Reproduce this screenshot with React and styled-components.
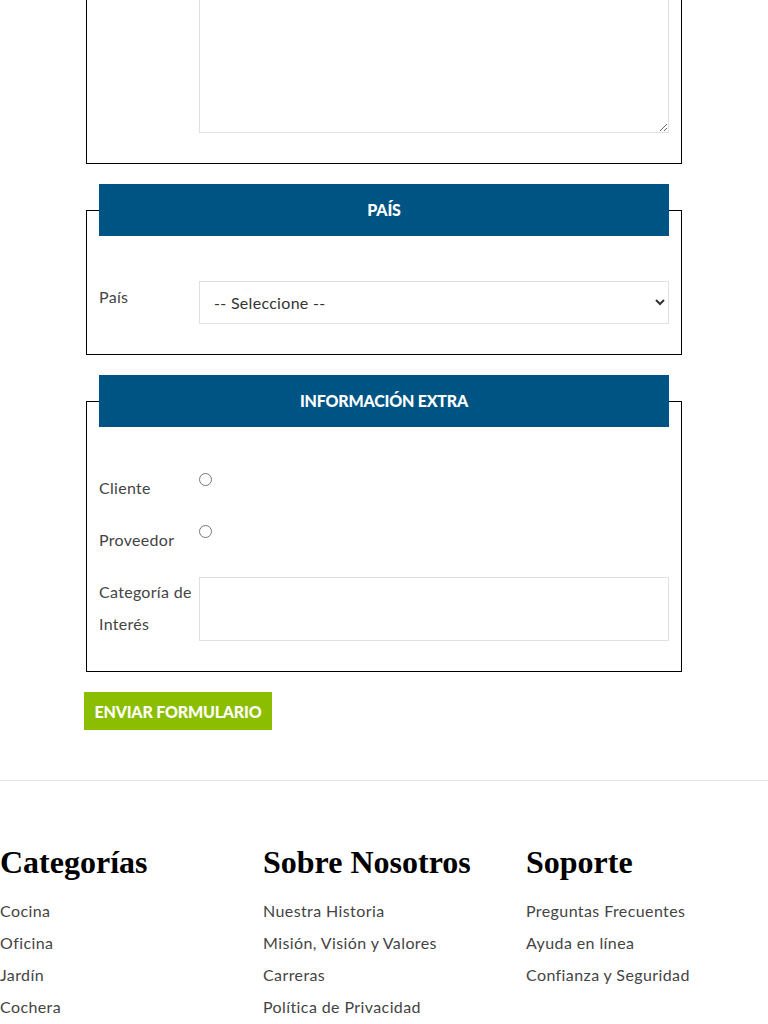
import React from 'react';
import styled, { createGlobalStyle } from 'styled-components';

const GlobalStyle = createGlobalStyle`
  * { box-sizing: border-box; }
  body {
    margin: 0;
    background: #fff;
    font-family: Lato, "Liberation Sans", sans-serif;
    color: #333;
  }
`;

const FormArea = styled.form`
  padding-left: 84px;
  width: 682px;
`;

// bottom part of the section above, scrolled out of view
const CutBox = styled.div`
  margin-left: 2px;
  border: 1px solid #000;
  border-top: none;
  padding: 0 12px 30px;
`;

const Box = styled.fieldset`
  margin: 20px 0 0 2px;
  min-width: 0;
  border: 1px solid #000;
  padding: 0 12px 30px;
`;

const Legend = styled.legend`
  display: block;
  width: 100%;
  height: 52px;
  padding: 0;
  background: #005483;
  color: #fff;
  text-align: center;
  font-family: Lato, sans-serif;
  font-weight: 900;
  font-size: 16px;
  line-height: 52px;
  letter-spacing: -0.2px;
  text-transform: uppercase;
`;

const Rows = styled.div`
  margin-top: 45px;
  display: flex;
  flex-direction: column;
  gap: 20px;
`;

const Row = styled.div`
  display: grid;
  grid-template-columns: 100px 1fr;
  align-items: start;
`;

const Label = styled.label`
  font-size: 16px;
  line-height: 32px;
  letter-spacing: 0.3px;
  color: #444;
`;

const TextArea = styled.textarea`
  display: block;
  width: 100%;
  height: ${p => p.$h}px;
  margin-top: ${p => (p.$cut ? 0 : 1)}px;
  border: 1px solid #e0e0e0;
  ${p => p.$cut && 'border-top: none;'}
  ${p => !p.$cut && 'resize: none;'}
  background: #fff;
  font: inherit;
`;

const Select = styled.select`
  width: 100%;
  height: 43px;
  border: 1px solid #e0e0e0;
  background: #fff;
  padding: 0 10px;
  font-family: Lato, sans-serif;
  font-size: 16px;
  letter-spacing: 0.3px;
  color: #333;
`;

const Radio = styled.input`
  width: 13px;
  height: 13px;
  margin: 1px 0 0;
`;

const SubmitButton = styled.button`
  display: block;
  margin-top: 20px;
  width: 188px;
  height: 38px;
  padding: 0;
  border: none;
  background: #8cbe00;
  color: #fff;
  font-family: Lato, sans-serif;
  font-weight: 900;
  font-size: 16px;
  letter-spacing: -0.2px;
  text-transform: uppercase;
`;

const Footer = styled.footer`
  margin-top: 50px;
  border-top: 1px solid #e2e2e2;
  padding-top: 62px;
  display: grid;
  grid-template-columns: repeat(3, 263px);
`;

const Column = styled.div``;

const ColTitle = styled.h3`
  margin: 0;
  font-family: "Liberation Serif", "DejaVu Serif", serif;
  font-weight: 700;
  font-size: 32px;
  line-height: 38px;
  color: #000;
`;

const Links = styled.ul`
  list-style: none;
  margin: 14px 0 0;
  padding: 0;

  li {
    font-size: 16px;
    line-height: 32px;
    letter-spacing: 0.4px;
    color: #444;
  }
`;

const footerCols = [
  { title: 'Categorías', links: ['Cocina', 'Oficina', 'Jardín', 'Cochera'] },
  { title: 'Sobre Nosotros', links: ['Nuestra Historia', 'Misión, Visión y Valores', 'Carreras', 'Política de Privacidad'] },
  { title: 'Soporte', links: ['Preguntas Frecuentes', 'Ayuda en línea', 'Confianza y Seguridad'] },
];

export default function App() {
  return (
    <>
      <GlobalStyle />
      <FormArea onSubmit={e => e.preventDefault()}>
        <CutBox>
          <Row>
            <span />
            <TextArea $h={133} $cut />
          </Row>
        </CutBox>

        <Box>
          <Legend>País</Legend>
          <Rows>
            <Row>
              <Label>País</Label>
              <Select defaultValue="">
                <option value="">-- Seleccione --</option>
              </Select>
            </Row>
          </Rows>
        </Box>

        <Box>
          <Legend>Información extra</Legend>
          <Rows>
            <Row>
              <Label>Cliente</Label>
              <Radio type="radio" name="tipo" />
            </Row>
            <Row>
              <Label>Proveedor</Label>
              <Radio type="radio" name="tipo" />
            </Row>
            <Row>
              <Label>Categoría de Interés</Label>
              <TextArea $h={64} />
            </Row>
          </Rows>
        </Box>

        <SubmitButton type="submit">Enviar formulario</SubmitButton>
      </FormArea>

      <Footer>
        {footerCols.map(col => (
          <Column key={col.title}>
            <ColTitle>{col.title}</ColTitle>
            <Links>
              {col.links.map(l => <li key={l}>{l}</li>)}
            </Links>
          </Column>
        ))}
      </Footer>
    </>
  );
}
